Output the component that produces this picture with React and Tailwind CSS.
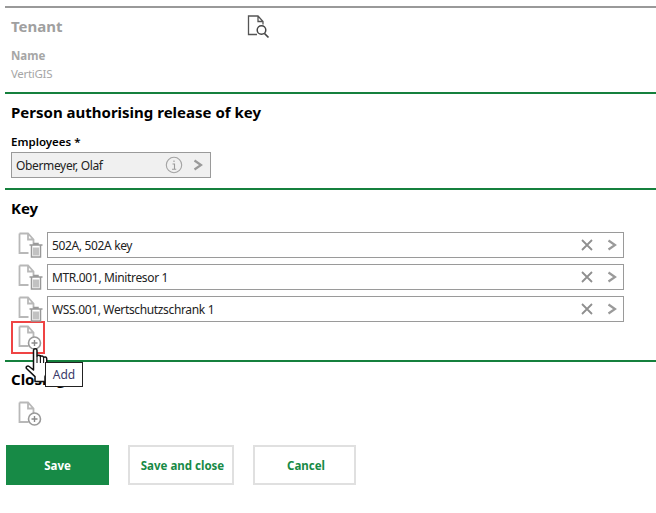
const font = { fontFamily: '"Noto Sans", "Open Sans", sans-serif' }

const DocBase = ({ color = '#b8b8b8' }) => (
  <path d="M1.500 1.500h8.500l5.500 6v6M10 1.500v6h5.500M1.500 1.500v19.500h9" fill="none" stroke={color} strokeWidth="1.800" />
)

const DocTrash = () => (
  <svg width="26" height="26" viewBox="0 0 26 26" className="block">
    <DocBase />
    <path d="M11.500 13h13M16 13v-1.500h4V13M13.500 13.500V25h9V13.500" fill="white" stroke="#999" strokeWidth="1.500" />
    <path d="M16 15.500v8M18 15.500v8M20 15.500v8" stroke="#999" strokeWidth="1.200" />
  </svg>
)

const DocAdd = () => (
  <svg width="26" height="26" viewBox="0 0 26 26" className="block">
    <DocBase />
    <circle cx="16.500" cy="18" r="6" fill="white" stroke="#9a9a9a" strokeWidth="1.600" />
    <path d="M16.500 15v6M13.500 18h6" stroke="#8a8a8a" strokeWidth="1.400" />
  </svg>
)

const DocSearch = () => (
  <svg width="24" height="24" viewBox="0 0 24 24" className="block">
    <path d="M10 19.500H1.500V1H11l5 5.500v3M11 1v5.500h5" fill="none" stroke="#555" strokeWidth="1.300" />
    <circle cx="14.500" cy="15" r="4.300" fill="white" stroke="#444" strokeWidth="1.500" />
    <path d="M17.500 18.500l4 4" stroke="#444" strokeWidth="1.700" />
  </svg>
)

const Chevron = () => (
  <svg width="10" height="12" viewBox="0 0 10 12">
    <path d="M1.500 1.500L8 6l-6.500 4.500" fill="none" stroke="#9a9a9a" strokeWidth="2.200" />
  </svg>
)

const Cross = () => (
  <svg width="12" height="12" viewBox="0 0 12 12">
    <path d="M1 1l10 10M11 1L1 11" stroke="#8f8f8f" strokeWidth="1.800" />
  </svg>
)

const Info = () => (
  <svg width="18" height="18" viewBox="0 0 18 18">
    <circle cx="9" cy="9" r="7.700" fill="none" stroke="#a3a3a3" strokeWidth="1.100" />
    <path d="M7.500 8h2v5M7 13.200h4.200M9 4.500v1.600" fill="none" stroke="#9a9a9a" strokeWidth="1.100" />
  </svg>
)

const Hand = () => (
  <svg width="25" height="36" viewBox="0 0 25 36" className="block">
    <path
      d="M8.500 2.500c0-2.200 3.500-2.200 3.500 0V8c1-1.200 3-1 3.400.5.900-1 2.800-.7 3.200.8 1-.8 3-.3 3.100 1.300l.3 11c0 3.500-1 5-2 7v5H10v-5L1.500 20.500c-1-1.500 1-3.300 2.700-2L8.500 22z"
      fill="white"
      stroke="#111"
      strokeWidth="1.500"
      strokeLinejoin="round"
    />
    <path d="M12 8v7M15.400 8.500v6.500M18.600 9.300V15" stroke="#111" strokeWidth="1.100" />
  </svg>
)

const keys = ['502A, 502A key', 'MTR.001, Minitresor 1', 'WSS.001, Wertschutzschrank 1']

export default function App() {
  return (
    <div className="relative w-[656px] h-[513px] bg-white overflow-hidden" style={font}>
      <div className="pt-[6px] pl-[5px]">
        {/* Tenant */}
        <section className="border-t-2 border-[#999999] h-[86px] pl-[6px]">
          <div className="flex items-center h-[37px]">
            <h2 className="w-[236px] text-[15px] font-bold text-[#a0a0a0] leading-none">Tenant</h2>
            <DocSearch />
          </div>
          <div className="mt-[3px] text-[11.500px] font-bold text-[#a6a6a6] leading-[16px]">Name</div>
          <div className="mt-[2px] text-[11.500px] text-[#a6a6a6] leading-[16px] tracking-[-0.3px]">VertiGIS</div>
        </section>

        {/* Person */}
        <section className="border-t-2 border-[#15803d] h-[96px] pl-[6px]">
          <h2 className="pt-[8px] text-[15px] font-bold text-black leading-[20px]">Person authorising release of key</h2>
          <div className="mt-[12px] text-[11.500px] font-semibold text-black leading-[16px]">Employees *</div>
          <div className="mt-[2px] w-[200px] h-[26px] border border-[#9a9a9a] bg-[#f0f0f0] flex items-center pl-[4px] pr-[7px]">
            <span className="flex-1 pt-[1px] text-[12px] text-[#222] tracking-[-0.35px]">Obermeyer, Olaf</span>
            <Info />
            <span className="ml-[10px] flex"><Chevron /></span>
          </div>
        </section>

        {/* Key */}
        <section className="border-t-2 border-[#15803d] h-[172px] pl-[6px]">
          <h2 className="pt-[8px] text-[15px] font-bold text-black leading-[20px]">Key</h2>
          <div className="mt-[14px] flex flex-col gap-[6px] w-[613px]">
            {keys.map((k) => (
              <div key={k} className="flex items-center h-[26px]">
                <div className="w-[36px] pl-[7px]"><DocTrash /></div>
                <div className="flex-1 h-[26px] border border-[#9a9a9a] flex items-center pl-[4px] pr-[6px]">
                  <span className="flex-1 pt-[1px] text-[12px] text-[#222] tracking-[-0.35px]">{k}</span>
                  <Cross />
                  <span className="ml-[14px] flex"><Chevron /></span>
                </div>
              </div>
            ))}
          </div>
          <div className="w-[34px] h-[33px] -mt-px border-2 border-[#ef4444] pl-[5px] pt-[2px]">
            <DocAdd />
          </div>
        </section>

        {/* Closing */}
        <section className="border-t-2 border-[#15803d] h-[85px] pl-[6px]">
          <h2 className="pt-[7px] text-[15px] font-bold text-black leading-[20px]">Closing</h2>
          <div className="mt-[12px] pl-[7px]"><DocAdd /></div>
        </section>

        {/* Buttons */}
        <div className="flex pl-[1px] gap-[19px]">
          <button className="w-[103px] h-[40px] pt-[2px] bg-[#178a46] text-white text-[11.500px] font-bold">Save</button>
          <button className="w-[106px] h-[40px] pt-[2px] pl-[3px] border-2 border-[#e0e0e0] text-[#178a46] text-[11.500px] font-bold">Save and close</button>
          <button className="w-[103px] h-[40px] pt-[2px] pl-[3px] border-2 border-[#e0e0e0] text-[#178a46] text-[11.500px] font-bold">Cancel</button>
        </div>
      </div>

      {/* pointer and tooltip over the Add icon */}
      <div className="absolute left-[25px] top-[348px]"><Hand /></div>
      <div className="absolute left-[45px] top-[362px] w-[38px] h-[25px] bg-white border border-[#222] flex items-center justify-center text-[12px] text-[#3a3a6a]">Add</div>
    </div>
  )
}
